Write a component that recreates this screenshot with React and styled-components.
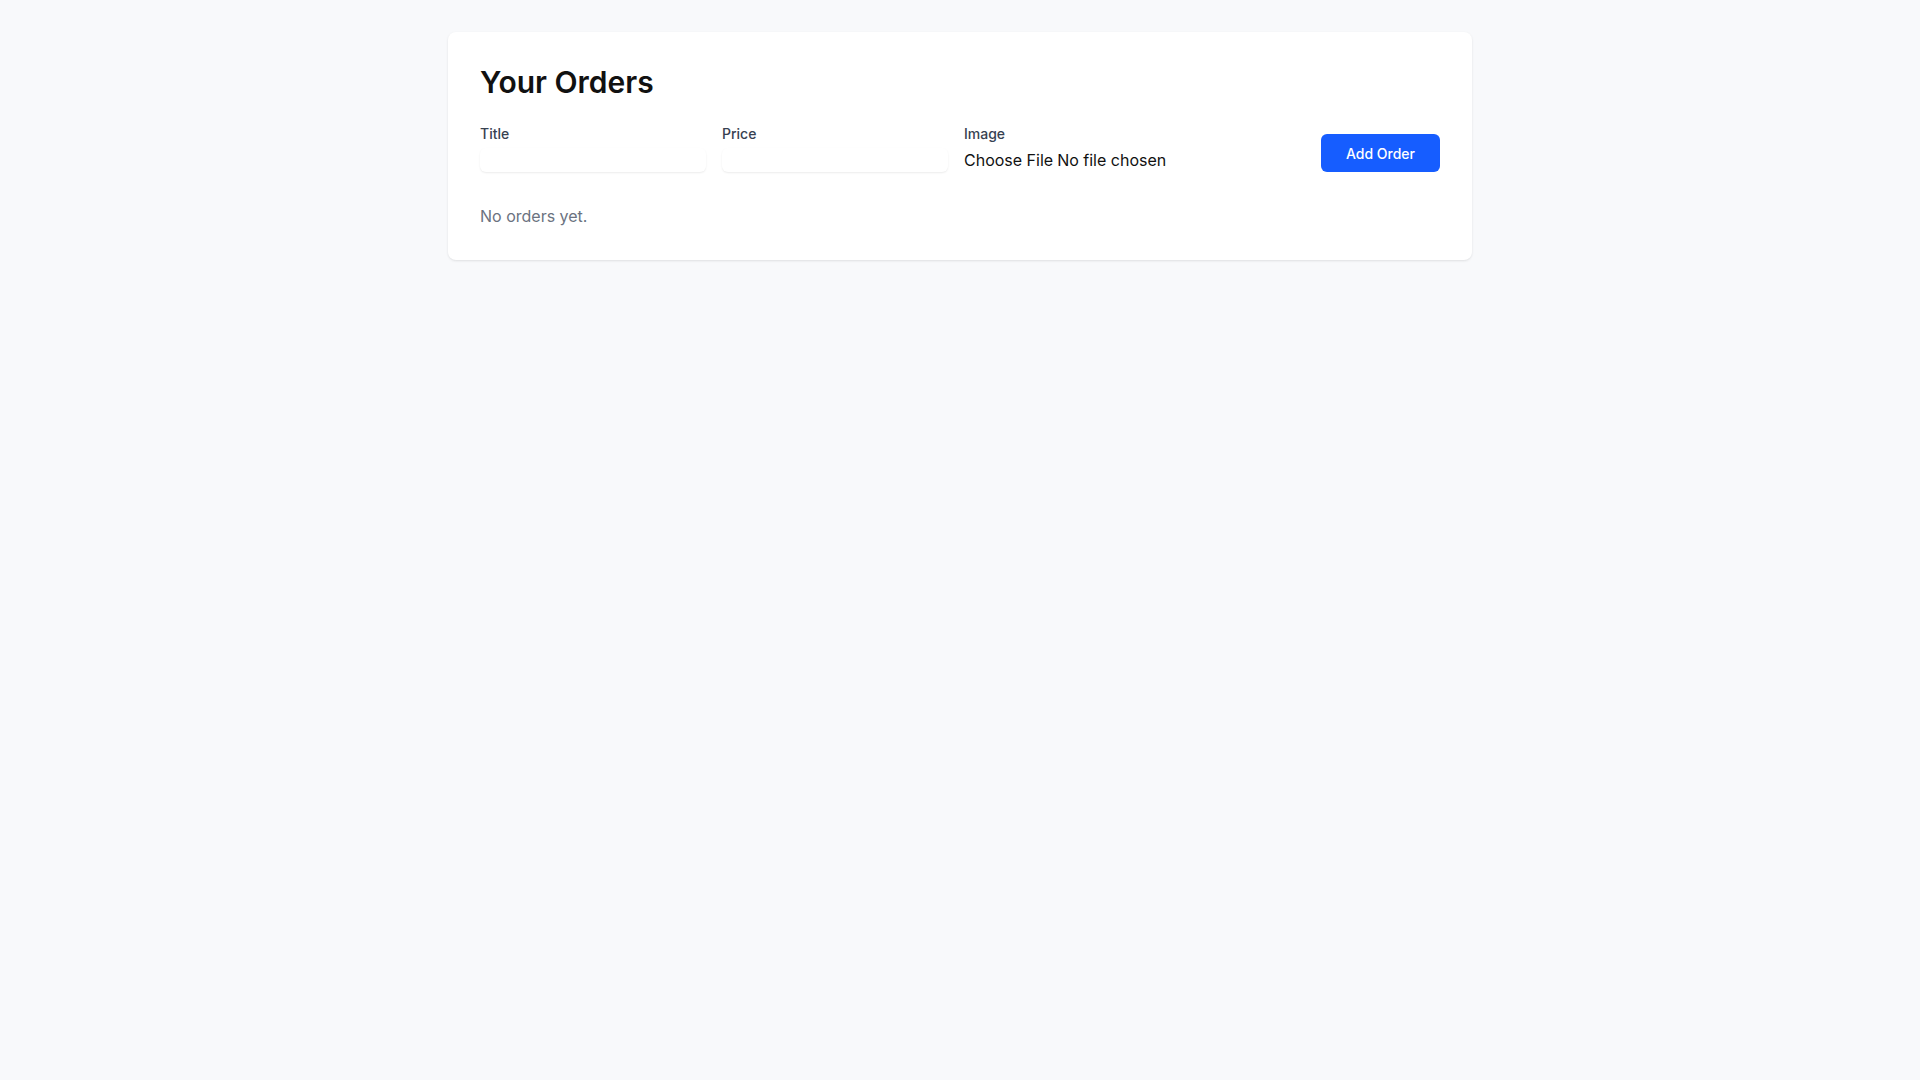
import { useState } from "react";
import styled, { createGlobalStyle } from "styled-components";

const GlobalStyle = createGlobalStyle`
  * {
    box-sizing: border-box;
  }

  body {
    margin: 0;
    background-color: #f8f9fb;
    font-family: Inter, "Liberation Sans", sans-serif;
    color: #111827;
  }
`;

export default function App() {
  const [orders] = useState([]);

  return (
    <Page>
      <GlobalStyle />
      <Card>
        <Heading>Your Orders</Heading>
        <OrderForm onSubmit={(e) => e.preventDefault()}>
          <Field $width="226px">
            <Label htmlFor="title">Title</Label>
            <TextInput id="title" type="text" />
          </Field>
          <Field $width="226px">
            <Label htmlFor="price">Price</Label>
            <TextInput id="price" type="number" />
          </Field>
          <Field $grow>
            <Label htmlFor="image">Image</Label>
            <FileInput id="image" type="file" />
          </Field>
          <AddButton type="submit">Add Order</AddButton>
        </OrderForm>
        {orders.length === 0 && <Empty>No orders yet.</Empty>}
      </Card>
    </Page>
  );
}

const Page = styled.div`
  min-height: 100vh;
  padding: 32px 0;
`;

const Card = styled.div`
  width: 1024px;
  margin: 0 auto;
  padding: 32px;
  background-color: #fff;
  border-radius: 8px;
  box-shadow: 0 1px 3px rgba(0, 0, 0, 0.07), 0 1px 2px rgba(0, 0, 0, 0.04);
`;

const Heading = styled.h1`
  margin: 0 0 24px;
  font-size: 30px;
  line-height: 36px;
  font-weight: 600;
  color: #111;
`;

const OrderForm = styled.form`
  display: flex;
  align-items: flex-end;
  gap: 16px;
`;

const Field = styled.div`
  display: flex;
  flex-direction: column;
  gap: 4px;
  width: ${(p) => p.$width || "auto"};
  flex: ${(p) => (p.$grow ? "1" : "none")};
  min-width: 0;
`;

const Label = styled.label`
  font-size: 14px;
  line-height: 20px;
  font-weight: 500;
  color: #374151;
`;

const TextInput = styled.input`
  height: 24px;
  padding: 0 8px;
  border: 0;
  border-radius: 6px;
  background: #fff;
  box-shadow: 0 1px 2px rgba(0, 0, 0, 0.08);
  font: inherit;
  font-size: 16px;
  outline: none;
  appearance: textfield;

  &::-webkit-inner-spin-button,
  &::-webkit-outer-spin-button {
    -webkit-appearance: none;
    margin: 0;
  }
`;

const FileInput = styled.input`
  height: 24px;
  font: inherit;
  font-size: 16px;
  line-height: 24px;
  color: #111;

  &::file-selector-button {
    margin: 0 4px 0 0;
    padding: 0;
    border: 0;
    background: transparent;
    font: inherit;
    color: inherit;
  }
`;

const AddButton = styled.button`
  flex: none;
  height: 38px;
  padding: 0 25px;
  border: 0;
  border-radius: 6px;
  background-color: #165dff;
  color: #fff;
  font-family: inherit;
  font-size: 14px;
  font-weight: 500;
  white-space: nowrap;
  cursor: pointer;
`;

const Empty = styled.p`
  margin: 32px 0 0;
  font-size: 16px;
  line-height: 24px;
  color: #6b7280;
`;
